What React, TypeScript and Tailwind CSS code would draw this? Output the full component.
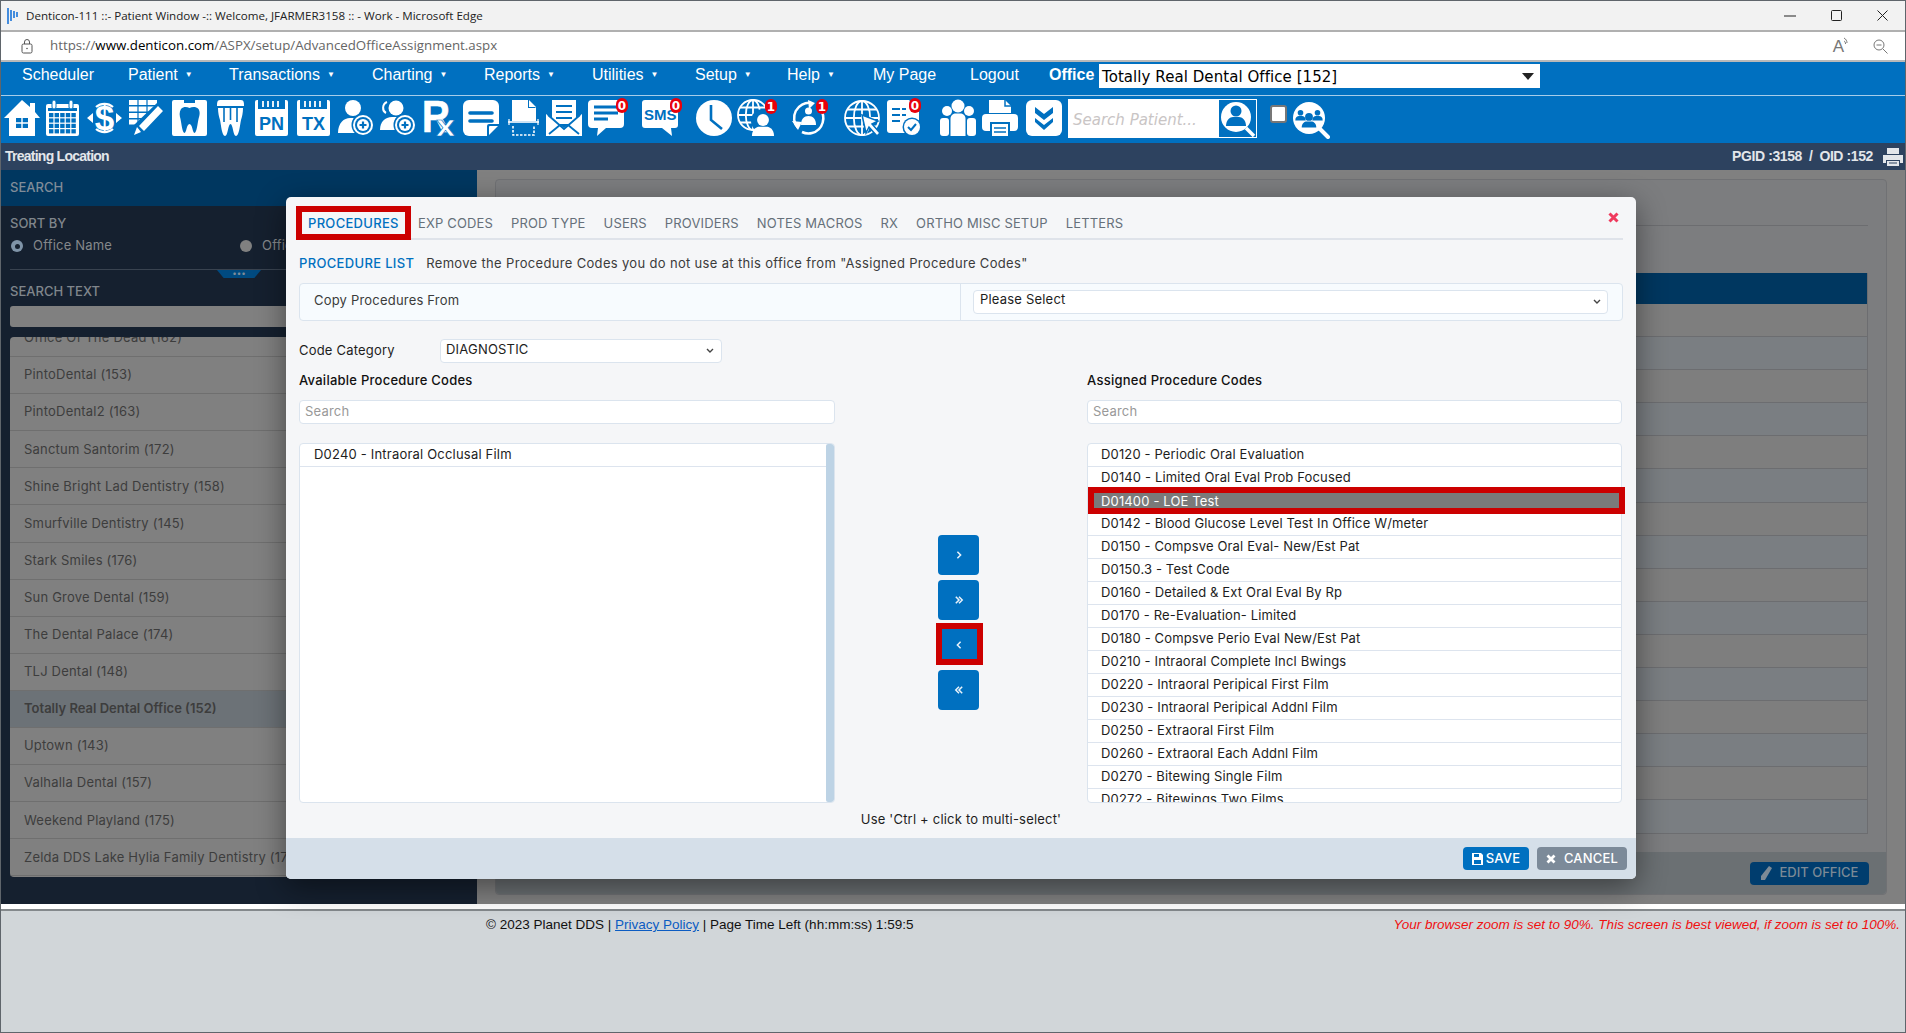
import React from "react";

const B = "#0070c0";
const font = "font-['Inter','Noto_Sans',sans-serif]";

function Ico({ c, w, children, badge, bc }: { c: string; w: number; children: React.ReactNode; badge?: string; bc?: string }) {
  return (
    <div className={`relative h-[36px] shrink-0 ${c}`}>
      <svg width={w} height={36} viewBox={`0 0 ${w} 36`} className="block overflow-visible">{children}</svg>
      {badge !== undefined && (
        <span className={`absolute flex h-[15px] w-[12px] items-center justify-center rounded-[6px] bg-[#e8000b] text-[12px] leading-none font-bold text-white font-['DejaVu_Sans',sans-serif] ${bc}`}>{badge}</span>
      )}
    </div>
  );
}

const Person = ({ x, y, s = 1, fill = "#fff" }: { x: number; y: number; s?: number; fill?: string }) => (
  <g transform={`translate(${x} ${y}) scale(${s})`} fill={fill}>
    <circle cx="0" cy="7" r="7" />
    <path d="M-13 26c0-8 5-11 9-11h8c4 0 9 3 9 11z" />
  </g>
);

const Globe = ({ r = 16, cx = 17, cy = 17 }: { r?: number; cx?: number; cy?: number }) => (
  <g fill="none" stroke="#fff" strokeWidth="1.8">
    <circle cx={cx} cy={cy} r={r} />
    <ellipse cx={cx} cy={cy} rx={r * 0.48} ry={r} />
    <path d={`M${cx} ${cy - r}V${cy + r}M${cx - r} ${cy}H${cx + r}M${cx - r * 0.85} ${cy - r * 0.5}H${cx + r * 0.85}M${cx - r * 0.85} ${cy + r * 0.5}H${cx + r * 0.85}`} />
  </g>
);

const PlusCircle = ({ x, y }: { x: number; y: number }) => (
  <g>
    <circle cx={x} cy={y} r="11.5" fill={B} />
    <circle cx={x} cy={y} r="10" fill="#fff" />
    <circle cx={x} cy={y} r="8" fill={B} />
    <circle cx={x} cy={y} r="6" fill="#fff" />
    <path d={`M${x - 3.5} ${y}h7M${x} ${y - 3.5}v7`} stroke={B} strokeWidth="2.2" />
  </g>
);

function Toolbar() {
  return (
    <div className="flex h-[47px] items-start bg-[#0070c0] pt-[4px]">
      <Ico c="ml-[3px]" w={36}>
        <path fill="#fff" d="M18 0l8 7V3h5v9l5 6h-5v18H5V18H0z" />
        <rect x="12" y="18" width="12" height="10" fill={B} />
        <path d="M18 18v10M12 23h12" stroke="#fff" strokeWidth="1.4" />
      </Ico>
      <Ico c="ml-[6px]" w={33}>
        <rect y="4" width="33" height="32" rx="2" fill="#fff" />
        <rect x="2" y="8" width="29" height="3" fill={B} />
        {[0, 1, 2, 3].map((r) => [0, 1, 2, 3, 4].map((k) => <rect key={`${r}${k}`} x={3 + k * 5.6} y={13 + r * 5.4} width="4.4" height="4.2" fill={B} />))}
        <rect x="6" width="4" height="9" rx="2" fill="#fff" stroke={B} />
        <rect x="23" width="4" height="9" rx="2" fill="#fff" stroke={B} />
      </Ico>
      <Ico c="ml-[8px]" w={35}>
        <path fill="#fff" d="M0 18l6-5v10zM35 18l-6-5v10z" />
        <path d="M9 7a13 13 0 0 1 17 0M9 29a13 13 0 0 0 17 0" stroke="#fff" strokeWidth="2.2" fill="none" />
        <text x="17.5" y="30" textAnchor="middle" fontSize="35" fontWeight="700" fill="#fff" fontFamily="Liberation Sans, sans-serif">$</text>
      </Ico>
      <Ico c="ml-[7px]" w={36}>
        <path fill="#fff" d="M0 0h28v5H0zM0 6.500h28v5H0zM0 13h22v5H0zM0 19.500h16v5H0z" />
        <path d="M9 0v25M18 0v19" stroke={B} strokeWidth="1.2" />
        <path fill={B} d="M28 3l8 7-22 24-12 3 3-12z" />
        <path fill="#fff" d="M29 6l5 5-19 20-5-5zM8 27l4 5-7 3z" />
      </Ico>
      <Ico c="ml-[7px]" w={35}>
        <path fill="#fff" d="M2 0h10v3h11V0h10a2 2 0 0 1 2 2v32a2 2 0 0 1-2 2H2a2 2 0 0 1-2-2V2a2 2 0 0 1 2-2z" />
        <path fill={B} d="M9 9c3-3 6-2 8.500-1 2.500-1 6-2 9 1 2 3 1 7 0 10-1 5-2 14-4 14s-2-9-5-9-3 9-5 9-3-9-4-14c-1-3-1.500-7 .5-10z" />
      </Ico>
      <Ico c="ml-[10px]" w={27}>
        <path fill="#fff" d="M3 0h21c3 0 3 3 3 6H0c0-3 0-6 3-6z" />
        <path fill="#fff" d="M1 8h25c0 5-1 9-2 12-1 5-2 16-5 16-3 0-3-12-5.500-12S11 36 8 36c-3 0-4-11-5-16-1-3-2-7-2-12z" />
        <path d="M7 8v14M13.500 8v12M20 8v14" stroke={B} strokeWidth="1.6" />
      </Ico>
      {["PN", "TX"].map((t, i) => (
        <Ico key={t} c={i === 0 ? "ml-[11px]" : "ml-[9px]"} w={33}>
          <rect width="33" height="36" rx="2" fill="#fff" />
          <rect x="3" width="27" height="9" fill={B} />
          <path d="M8 1v6M13 1v6M18 1v6M23 1v6" stroke="#fff" strokeWidth="1.8" />
          <text x="16.500" y="30" textAnchor="middle" fontSize="18" fontWeight="700" fill={B} fontFamily="Liberation Sans, sans-serif">{t}</text>
        </Ico>
      ))}
      <Ico c="ml-[8px]" w={36}>
        <circle cx="15" cy="8" r="8" fill="#fff" />
        <path fill="#fff" d="M0 33c0-10 6-15 12-15h6c5 0 10 3 11 15z" />
        <PlusCircle x={25} y={25} />
      </Ico>
      <Ico c="ml-[6px]" w={36}>
        <circle cx="16" cy="8" r="7.500" fill="#fff" />
        <path d="M7 2C2 4 2 11 6 13" stroke="#fff" strokeWidth="2" fill="none" />
        <path fill="#fff" d="M0 30c0-8 5-13 12-13h6c5 0 9 3 10 13z" />
        <PlusCircle x={25} y={25} />
      </Ico>
      <Ico c="ml-[6px]" w={33}>
        <text x="0" y="32" fontSize="45" fontWeight="700" fill="#fff" stroke="#fff" strokeWidth="0.7" textLength="28" lengthAdjust="spacingAndGlyphs" fontFamily="Liberation Sans, sans-serif">R</text>
        <text x="14" y="36" fontSize="30" fontWeight="700" fill="#fff" stroke={B} strokeWidth="0.6" textLength="19" lengthAdjust="spacingAndGlyphs" fontFamily="Liberation Sans, sans-serif">x</text>
      </Ico>
      <Ico c="ml-[8px]" w={36}>
        <path fill="#fff" d="M6 0h24a6 6 0 0 1 6 6v19L25 36H6a6 6 0 0 1-6-6V6a6 6 0 0 1 6-6z" />
        <path d="M7 13h22M7 21h22" stroke={B} strokeWidth="3.6" strokeLinecap="round" />
        <path fill={B} d="M24 36V26a2 2 0 0 1 2-2h10v2h-9a1 1 0 0 0-1 1v9z" />
      </Ico>
      <Ico c="ml-[9px]" w={31}>
        <path fill="#fff" d="M4 0h17l7 7v14H4z" />
        <path fill={B} d="M21 0v7h7l-1 1h-7V0z" />
        <path d="M0 22h31" stroke="#fff" strokeWidth="1.6" />
        <path d="M1 19v6M30 19v6" stroke="#fff" strokeWidth="1.2" />
        <path d="M5 26v9h21v-9" stroke="#fff" strokeWidth="1.6" fill="none" strokeDasharray="2.500 1.500" />
      </Ico>
      <Ico c="ml-[7px]" w={36}>
        <rect x="6" width="24" height="24" fill="#fff" />
        <path d="M10 6h16M10 12h16M10 18h16" stroke={B} strokeWidth="2" />
        <path fill={B} d="M0 15l6-5v5zM36 15l-6-5v5z" />
        <path fill="#fff" d="M0 14l18 14 18-14v22H0z" />
        <path d="M3 34l11-9M33 34l-11-9M2 15l16 14 16-14" stroke={B} strokeWidth="1.8" fill="none" />
      </Ico>
      <Ico c="ml-[6px]" w={36} badge="0" bc="left-[28px] top-[-2px]">
        <path fill="#fff" d="M4 0h28a4 4 0 0 1 4 4v20a4 4 0 0 1-4 4H18L9 36l1-8H4a4 4 0 0 1-4-4V4a4 4 0 0 1 4-4z" />
        <path d="M6 7h24M6 13h24M6 19h14" stroke={B} strokeWidth="3" />
      </Ico>
      <Ico c="ml-[18px]" w={36} badge="0" bc="left-[28px] top-[-2px]">
        <path fill="#fff" d="M3 0h30a3 3 0 0 1 3 3v22a3 3 0 0 1-3 3h-4l1 8-10-8H3a3 3 0 0 1-3-3V3a3 3 0 0 1 3-3z" />
        <text x="2" y="20" fontSize="15" fontWeight="700" fill={B} fontFamily="Liberation Sans, sans-serif">SMS</text>
      </Ico>
      <Ico c="ml-[18px]" w={36}>
        <circle cx="18" cy="18" r="18" fill="#fff" />
        <path d="M15 5v15l11 9" stroke={B} strokeWidth="2.600" fill="none" />
      </Ico>
      <Ico c="ml-[5px]" w={36} badge="1" bc="left-[28px] top-[-1px]">
        <Globe r={15} cx={16} cy={15} />
        <circle cx="26" cy="21" r="12" fill={B} />
        <Person x={26} y={14} s={0.85} />
      </Ico>
      <Ico c="ml-[18px]" w={35} badge="1" bc="left-[25px] top-[-1px]">
        <path d="M7 28A15 15 0 0 1 20 3M28 8a15 15 0 0 1-7 25 15 15 0 0 1-10-1" fill="none" stroke="#fff" strokeWidth="2.500" />
        <path fill="#fff" d="M1 21l10 1-4 8zM17 0l7 3-6 6z" />
        <circle cx="17.500" cy="11" r="3.500" fill="#fff" />
        <path fill="#fff" d="M10 25c0-6 3-9 7.500-9s7.500 3 7.500 9z" />
      </Ico>
      <Ico c="ml-[19px]" w={36}>
        <Globe r={17} cx={17} cy={18} />
        <path fill="#fff" stroke={B} strokeWidth="1.5" d="M17 15l16 6-6 3 8 9-3 3-8-9-3 6z" />
      </Ico>
      <Ico c="ml-[6px]" w={33} badge="0" bc="left-[22px] top-[-2px]">
        <path fill="#fff" d="M3 0h19l10 10v23H3a3 3 0 0 1-3-3V3a3 3 0 0 1 3-3z" />
        <path d="M5 9h8M15 9h4M5 15h8M15 15h4M5 21h8" stroke={B} strokeWidth="2" />
        <circle cx="25" cy="27" r="9.500" fill={B} />
        <circle cx="25" cy="27" r="8" fill="#fff" />
        <path d="M21 27l3 3 5-6" stroke={B} strokeWidth="2" fill="none" />
      </Ico>
      <Ico c="ml-[20px]" w={36}>
        <circle cx="7" cy="11" r="5" fill="#fff" />
        <circle cx="29" cy="11" r="5" fill="#fff" />
        <rect x="0" y="18" width="9" height="18" rx="3" fill="#fff" />
        <rect x="27" y="18" width="9" height="18" rx="3" fill="#fff" />
        <circle cx="18" cy="6" r="6.500" fill="#fff" />
        <path fill="#fff" d="M10.500 36V19c0-4 3-5.500 5-5.500h5c2 0 5 1.500 5 5.500v17z" />
      </Ico>
      <Ico c="ml-[6px]" w={36}>
        <path fill="#fff" d="M7 0h16l6 6v7H7z" />
        <path d="M23 0v6h6" stroke={B} strokeWidth="1.500" fill="none" />
        <rect y="14" width="36" height="17" rx="4" fill="#fff" />
        <rect x="8" y="22" width="20" height="14" fill={B} />
        <rect x="10" y="24" width="16" height="12" fill="#fff" />
        <path d="M12 28h12M12 32h12" stroke={B} strokeWidth="1.600" />
      </Ico>
      <Ico c="ml-[8px]" w={36}>
        <rect width="36" height="36" rx="6" fill="#fff" />
        <path fill={B} d="M9 7l9 7 9-7v6l-9 7-9-7zM9 18l9 7 9-7v4l-9 8-9-8z" />
      </Ico>
      <div className="ml-[6px] flex h-[39px] w-[189px] shrink-0 -translate-y-[1px] items-center justify-between bg-white pl-[5px]">
        <span className="pt-[3px] text-[15px] leading-none text-[#c9c5c5] italic font-['DejaVu_Sans',sans-serif]">Search Patient...</span>
        <svg width="37" height="37" viewBox="0 0 37 37" className="mr-[1px] block">
          <rect width="37" height="37" fill={B} />
          <circle cx="17" cy="17" r="15" fill="#fff" />
          <path d="M27 28l8 8" stroke="#fff" strokeWidth="3.500" />
          <circle cx="17" cy="11" r="5.500" fill={B} />
          <path fill={B} d="M7 26c0-6 4-9 7-9h6c3 0 7 3 7 9z" />
        </svg>
      </div>
      <div className="ml-[13px] mt-[5px] h-[18px] w-[17px] shrink-0 rounded-[3px] border-2 border-[#777] bg-white" />
      <svg width="37" height="37" viewBox="0 0 37 37" className="ml-[6px] mt-[2px] block shrink-0">
        <circle cx="16" cy="16" r="16" fill="#fff" />
        <path d="M26 26l9 9" stroke="#fff" strokeWidth="4" strokeLinecap="round" />
        <Person x={7.500} y={8} s={0.4} fill={B} />
        <Person x={24.500} y={8} s={0.4} fill={B} />
        <Person x={16} y={11} s={0.56} fill={B} />
      </svg>
    </div>
  );
}

function Nav() {
  const items: [string, string, boolean][] = [
    ["Scheduler", "w-[106px]", false],
    ["Patient", "w-[101px]", true],
    ["Transactions", "w-[143px]", true],
    ["Charting", "w-[112px]", true],
    ["Reports", "w-[108px]", true],
    ["Utilities", "w-[103px]", true],
    ["Setup", "w-[92px]", true],
    ["Help", "w-[86px]", true],
    ["My Page", "w-[97px]", false],
    ["Logout", "w-[79px]", false],
  ];
  return (
    <div className="flex h-[33px] items-start bg-[#0070c0] pl-[21px] pt-[2px] font-['Liberation_Sans',sans-serif] text-[16px] text-white">
      {items.map(([t, w, a]) => (
        <div key={t} className={`flex h-[24px] shrink-0 items-center pb-[2px] ${w}`}>
          <span>{t}</span>
          {a && <span className="ml-[7px] text-[8px]">▼</span>}
        </div>
      ))}
      <div className="flex h-[24px] w-[50px] shrink-0 items-center pb-[2px] font-bold">Office</div>
      <div className="flex h-[24px] w-[441px] items-center justify-between bg-white pl-[3px] pr-[6px] font-['DejaVu_Sans',sans-serif] text-[15px] tracking-[0.06px] text-black">
        <span className="pt-[2px]">Totally Real Dental Office [152]</span>
        <svg width="12" height="7" viewBox="0 0 12 7"><path d="M0 0h12L6 7z" fill="#222" /></svg>
      </div>
    </div>
  );
}

function Sidebar() {
  const rows = ["Office Of The Dead (162)", "PintoDental (153)", "PintoDental2 (163)", "Sanctum Santorim (172)", "Shine Bright Lad Dentistry (158)", "Smurfville Dentistry (145)", "Stark Smiles (176)", "Sun Grove Dental (159)", "The Dental Palace (174)", "TLJ Dental (148)", "Totally Real Dental Office (152)", "Uptown (143)", "Valhalla Dental (157)", "Weekend Playland (175)", "Zelda DDS Lake Hylia Family Dentistry (171)"];
  return (
    <div className={`flex w-[476px] shrink-0 flex-col bg-[#15202f] ${font} text-[13px]`}>
      <div className="flex h-[36px] items-center bg-[#003760] pl-[9px] font-medium text-[#7f8c99]">SEARCH</div>
      <div className="px-[9px]">
        <div className="mt-[10px] flex h-[16px] items-center font-medium text-[#80868c]">SORT BY</div>
        <div className="mt-[6px] flex h-[16px] items-center tracking-[0.2px] text-[#85888b]">
          <div className="flex w-[230px] items-center pl-[1px]">
            <span className="flex h-[12px] w-[12px] items-center justify-center rounded-full bg-[#7f94a8]"><span className="h-[5px] w-[5px] rounded-full bg-[#15202f]" /></span>
            <span className="ml-[10px]">Office Name</span>
          </div>
          <span className="h-[12px] w-[12px] rounded-full bg-[#808080]" />
          <span className="ml-[10px]">Office ID</span>
        </div>
        <div className="relative mt-[15px] h-[1px] bg-[#394350]">
          <div className="absolute left-[207px] top-[1px] flex h-[8px] w-[44px] items-start justify-center bg-[#004a80] text-[8px] leading-[6px] text-[#7f8c99] [clip-path:polygon(0_0,100%_0,85%_100%,15%_100%)]">•••</div>
        </div>
        <div className="mt-[14px] flex h-[16px] items-center font-medium text-[#80868c]">SEARCH TEXT</div>
        <div className="mt-[6px] h-[21px] rounded-[3px] bg-[#808080]" />
        <div className="mt-[10px] h-[540px] overflow-hidden rounded-[4px] bg-[#808080] tracking-[0.2px] text-[#3d3d3d]">
          <div className="-mt-[17px]">
            {rows.map((r) => (
              <div key={r} className={`flex h-[37.100px] items-center whitespace-nowrap border-b border-[#6f6f6f] pl-[14px] ${r.startsWith("Totally") ? "bg-[#6c7277] font-semibold tracking-[0px]" : ""}`}>{r}</div>
            ))}
          </div>
        </div>
      </div>
    </div>
  );
}

function Main() {
  return (
    <div className="flex min-w-0 flex-1 flex-col bg-[#808080] pl-[18px] pr-[18px] pt-[9px] pb-[9px]">
      <div className="flex h-full flex-col rounded-[4px] border border-[#707174] bg-[#7c7d7f]">
        <div className="ml-[19px] mr-[18px] h-[46px] border-b border-[#6c6d70]" />
        <div className="ml-[19px] mr-[18px] mt-[47px] flex flex-col border-r border-[#6c6d70]">
          <div className="h-[31px] bg-[#003760]" />
          {Array.from({ length: 16 }).map((_, i) => (
            <div key={i} className={`h-[33.100px] border-b border-[#6c6d70] ${i % 2 ? "bg-[#7a7e82]" : "bg-[#7e7e7e]"}`} />
          ))}
        </div>
        <div className="mt-auto flex h-[42px] items-center justify-end rounded-b-[4px] bg-[#6b7073] pr-[17px]">
          <div className={`flex h-[23px] w-[119px] items-center justify-center gap-[8px] rounded-[4px] bg-[#003d6e] text-[13px] font-medium text-[#7c8a96] ${font}`}>
            <svg width="11" height="14" viewBox="0 0 11 14"><path d="M8 0l3 2-7 12-4 0 0-4z" fill="#7c8a96" /></svg>
            EDIT OFFICE
          </div>
        </div>
      </div>
    </div>
  );
}

const Chevron = ({ className = "" }: { className?: string }) => (
  <svg width="8" height="6" viewBox="0 0 8 6" className={className}><path d="M1 1l3 3 3-3" stroke="#444" strokeWidth="1.400" fill="none" /></svg>
);

function Btn({ d }: { d: string }) {
  return (
    <div className="flex h-[40px] w-[41px] items-center justify-center rounded-[4px] bg-[#0070c0]">
      <svg width="10" height="8" viewBox="0 0 12 10"><path d={d} stroke="#e8f2fa" strokeWidth="1.900" fill="none" /></svg>
    </div>
  );
}

function ListRow({ t, c }: { t: string; c: string }) {
  return <div className={`flex h-[23px] shrink-0 items-center whitespace-nowrap border-b border-[#dde4ee] text-[#1d1d1d] ${c}`}>{t}</div>;
}

function Modal() {
  const tabs = ["EXP CODES", "PROD TYPE", "USERS", "PROVIDERS", "NOTES MACROS", "RX", "ORTHO MISC SETUP", "LETTERS"];
  const assigned1 = ["D0120 - Periodic Oral Evaluation", "D0140 - Limited Oral Eval Prob Focused"];
  const assigned2 = ["D0142 - Blood Glucose Level Test In Office W/meter", "D0150 - Compsve Oral Eval- New/Est Pat", "D0150.3 - Test Code", "D0160 - Detailed & Ext Oral Eval By Rp", "D0170 - Re-Evaluation- Limited", "D0180 - Compsve Perio Eval New/Est Pat", "D0210 - Intraoral Complete Incl Bwings", "D0220 - Intraoral Peripical First Film", "D0230 - Intraoral Peripical Addnl Film", "D0250 - Extraoral First Film", "D0260 - Extraoral Each Addnl Film", "D0270 - Bitewing Single Film", "D0272 - Bitewings Two Films"];
  return (
    <div className={`absolute left-[285px] top-[196px] flex h-[682px] w-[1350px] flex-col rounded-[5px] bg-[#f5f6f8] text-[13px] tracking-[0.2px] text-[#3b3b3b] shadow-[0_8px_30px_rgba(0,0,0,0.45)] ${font}`}>
      <div className="relative mx-[13px] mt-[9px] flex h-[34px] shrink-0 items-center border-b-2 border-[#dfe3ea] pl-[9px] pt-[3px] tracking-[0.15px]">
        <span className="w-[110px] shrink-0 font-medium tracking-[0.3px] text-[#0070c0]">PROCEDURES</span>
        <div className="flex gap-[18px] text-[#66707a]">
          {tabs.map((t) => <span key={t} className="whitespace-nowrap">{t}</span>)}
        </div>
        <div className="absolute -left-[3px] top-0 h-[34px] w-[115px] border-[6px] border-[#cc0000]" />
        <svg width="11" height="11" viewBox="0 0 11 11" className="absolute right-[4px] top-[6px]"><path d="M1.500 1.500l8 8M9.500 1.500l-8 8" stroke="#ef3a5d" strokeWidth="3" /></svg>
      </div>
      <div className="mx-[13px] flex h-[43px] shrink-0 items-center pt-[5px] tracking-[0.33px]">
        <span className="font-medium text-[#0070c0]">PROCEDURE LIST</span>
        <span className="ml-[12px]">Remove the Procedure Codes you do not use at this office from "Assigned Procedure Codes"</span>
      </div>
      <div className="mx-[13px] flex h-[38px] shrink-0 rounded-[4px] border border-[#dbe4ee] bg-[#f7fbfe]">
        <div className="flex w-[661px] items-center border-r border-[#dbe4ee] pb-[2px] pl-[14px]">Copy Procedures From</div>
        <div className="flex flex-1 items-center pl-[12px] pr-[14px]">
          <div className="flex h-[24px] w-full items-center justify-between rounded-[4px] border border-[#dbe4ee] bg-white pl-[6px] pr-[6px] pb-[4px] text-[#1d1d1d]">Please Select<Chevron className="mt-[3px]" /></div>
        </div>
      </div>
      <div className="mx-[13px] mt-[18px] flex h-[24px] shrink-0 items-center">
        <span className="w-[141px] text-[#1d1d1d]">Code Category</span>
        <div className="flex h-[24px] w-[282px] items-center justify-between rounded-[4px] border border-[#dbe4ee] bg-white pl-[5px] pr-[7px] pb-[2px] text-[#1d1d1d]">DIAGNOSTIC<Chevron className="mt-[2px]" /></div>
      </div>
      <div className="mx-[13px] grid shrink-0 grid-cols-[536px_252px_535px]">
        <div className="flex h-[34px] items-center pt-[2px] font-medium tracking-[0.25px] text-[#111]">Available Procedure Codes</div>
        <div />
        <div className="flex h-[34px] items-center pt-[2px] font-medium tracking-[0.25px] text-[#111]">Assigned Procedure Codes</div>
        <div className="mt-[3px] flex h-[24px] items-center rounded-[4px] border border-[#dbe4ee] bg-white pl-[5px] text-[#999]">Search</div>
        <div />
        <div className="mt-[3px] flex h-[24px] items-center rounded-[4px] border border-[#dbe4ee] bg-white pl-[5px] text-[#999]">Search</div>
        <div className="relative mt-[19px] flex h-[360px] flex-col overflow-hidden rounded-[4px] border border-[#dbe4ee] bg-white pr-[8px]">
          <ListRow t="D0240 - Intraoral Occlusal Film" c="pl-[14px]" />
          <div className="absolute right-0 top-0 h-full w-[8px] rounded-[2px] bg-[#bdd3e5]" />
        </div>
        <div className="mt-[19px] flex flex-col items-start gap-[5px] pl-[103px] pt-[92px]">
          <Btn d="M4 1l4 4-4 4" />
          <Btn d="M2 1l4 4-4 4M6 1l4 4-4 4" />
          <div className="relative">
            <Btn d="M8 1L4 5l4 4" />
            <div className="absolute -left-[2px] -top-[2px] h-[42px] w-[47px] border-[6px] border-[#cc0000]" />
          </div>
          <Btn d="M6 1L2 5l4 4M10 1L6 5l4 4" />
        </div>
        <div className="relative mt-[19px] h-[360px]">
          <div className="flex h-full flex-col overflow-hidden rounded-[4px] border border-[#dbe4ee] bg-white tracking-[0.15px]">
            {assigned1.map((t) => <ListRow key={t} t={t} c="pl-[13px]" />)}
            <div className="flex h-[23px] shrink-0 items-center whitespace-nowrap bg-[#7a7a7a] pl-[13px] text-white">D01400 - LOE Test</div>
            {assigned2.map((t) => <ListRow key={t} t={t} c="pl-[13px]" />)}
          </div>
          <div className="absolute left-[1px] top-[44px] h-[27px] w-[537px] border-[6px] border-[#cc0000]" />
        </div>
      </div>
      <div className="flex h-[35px] shrink-0 items-center justify-center pb-[1px] tracking-[0.2px] text-[#1d1d1d]">Use 'Ctrl + click to multi-select'</div>
      <div className="mt-auto flex h-[41px] shrink-0 items-center justify-end gap-[8px] rounded-b-[5px] bg-[#d5dfe9] pr-[9px]">
        <div className="flex h-[23px] w-[66px] items-center justify-center gap-[3px] rounded-[4px] bg-[#0070c0] font-medium text-white">
          <svg width="11" height="12" viewBox="0 0 11 12"><path fill="#fff" d="M0 0h9l2 2v10H0z" /><path fill="#0070c0" d="M2 1h5v3H2zM2 7h7v4H2z" /></svg>
          SAVE
        </div>
        <div className="flex h-[23px] w-[90px] items-center justify-center gap-[8px] rounded-[4px] bg-[#7c8a99] font-medium text-white">
          <svg width="10" height="10" viewBox="0 0 10 10"><path d="M1.500 1.500l7 7M8.500 1.500l-7 7" stroke="#fff" strokeWidth="2.800" /></svg>
          CANCEL
        </div>
      </div>
    </div>
  );
}

export default function App() {
  return (
    <div className="relative flex h-[1033px] w-[1906px] flex-col overflow-hidden border border-[#5f656b] bg-white">
      <div className="flex h-[29px] shrink-0 items-center bg-[#f2f2f2] font-['Open_Sans',sans-serif] text-[11.600px] text-[#222]">
        <svg width="12" height="16" viewBox="0 0 12 16" className="ml-[6px]"><path d="M1 0v16M4 2v11M7 3v7M10 4v5" stroke="#1a73d8" strokeWidth="1.600" /></svg>
        <span className="ml-[7px]">Denticon-111 ::- Patient Window -:: Welcome, JFARMER3158 :: - Work - Microsoft Edge</span>
        <div className="ml-auto flex items-center pr-[17px]">
          <svg width="12" height="2" viewBox="0 0 12 2"><path d="M0 1h12" stroke="#222" /></svg>
          <svg width="11" height="11" viewBox="0 0 11 11" className="ml-[35px]"><rect x=".5" y=".5" width="10" height="10" rx="1" fill="none" stroke="#222" /></svg>
          <svg width="11" height="11" viewBox="0 0 11 11" className="ml-[35px]"><path d="M.5.5l10 10M10.500.5l-10 10" stroke="#222" /></svg>
        </div>
      </div>
      <div className="flex h-[32px] shrink-0 items-center border-y-2 border-b-[#b9b9b9] border-t-[#b0b0b0] bg-white font-['Open_Sans',sans-serif] text-[13.300px] text-[#666]">
        <svg width="12" height="15" viewBox="0 0 12 15" className="ml-[20px]"><rect x="1" y="5" width="10" height="9" rx="1.500" fill="none" stroke="#555" /><path d="M3.500 5V3a2.500 2.500 0 0 1 5 0v2" fill="none" stroke="#555" /><circle cx="6" cy="9.500" r=".8" fill="#555" /></svg>
        <span className="ml-[17px]">https://<span className="text-black">www.denticon.com</span>/ASPX/setup/AdvancedOfficeAssignment.aspx</span>
        <div className="ml-auto flex items-center pr-[17px] text-[#777]">
          <span className="text-[17px] leading-none font-['Liberation_Sans',sans-serif]">A</span>
          <svg width="5" height="10" viewBox="0 0 5 10" className="-mt-[8px]"><path d="M0 1c2 1 3 3 3 5M0 4c1 .5 1.500 1.500 1.500 3" fill="none" stroke="#777" /></svg>
          <svg width="15" height="15" viewBox="0 0 15 15" className="ml-[24px]"><circle cx="6" cy="6" r="5" fill="none" stroke="#777" /><path d="M3.500 6h5M10 10l4.500 4.500" stroke="#777" /></svg>
        </div>
      </div>
      <Nav />
      <div className="h-[1px] shrink-0 bg-[#a6cdea]" />
      <Toolbar />
      <div className="flex h-[27px] shrink-0 items-center justify-between bg-[#2d425f] pl-[4px] pr-[2px] font-['Liberation_Sans',sans-serif] text-[14px] font-bold tracking-[-0.4px] text-[#e3e6ea]">
        <span className="tracking-[-0.75px]">Treating Location</span>
        <div className="flex items-center gap-[8px]">
          <span className="whitespace-pre pr-[2px]">PGID :3158  /  OID :152</span>
          <svg width="20" height="18" viewBox="0 0 20 18"><path fill="#e3e6ea" d="M4 0h12v6H4zM0 7h20v8h-3v-3H3v3H0zM4 13h12v5H4z" /><path d="M6 15h8" stroke="#2d425f" /></svg>
        </div>
      </div>
      <div className="flex h-[734px] shrink-0">
        <Sidebar />
        <Main />
      </div>
      <div className="h-[5px] shrink-0 bg-white" />
      <div className="flex flex-1 items-start border-t-2 border-[#84898c] bg-[#d1d6d9] pt-[4px] font-['Liberation_Sans',sans-serif] text-[13.500px] text-[#111]">
        <span className="ml-[485px]">© 2023 Planet DDS | <span className="text-[#0b5cc2] underline">Privacy Policy</span> | Page Time Left (hh:mm:ss) 1:59:5</span>
        <span className="ml-auto pr-[5px] italic text-[#f01010]">Your browser zoom is set to 90%. This screen is best viewed, if zoom is set to 100%.</span>
      </div>
      <Modal />
    </div>
  );
}
